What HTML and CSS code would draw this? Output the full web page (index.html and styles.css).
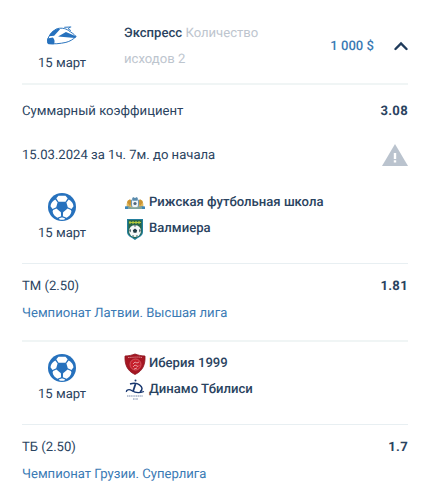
FILE: index.html
```html
<!DOCTYPE html>
<html lang="ru">
<head>
    <meta charset="UTF-8">
    <meta name="viewport" content="width=device-width, initial-scale=1.0">
    <title>Экспресс</title>
    <link rel="stylesheet" href="styles.css">
</head>
<body>
    <svg class="sprite" width="0" height="0">
        <symbol id="ball" viewBox="0 0 28 28">
            <circle cx="14" cy="14" r="14" fill="#2671bd"/>
            <g fill="#fff">
                <path d="M10.5 2.7h7l2.2 2.6-2.2 3.4h-7L8.300 5.300z"/>
                <path d="M7.3 6.500l2.300 3-1.400 4.700-3.700 1.700-2-2.700C2.800 10.200 4.700 7.900 7.300 6.500z"/>
                <path d="M20.7 6.500l-2.300 3 1.400 4.700 3.700 1.700 2-2.700c-.3-3-2.200-5.300-4.800-6.700z"/>
                <path d="M8.400 15.500l4.500 3.700.2 4.100-3.700 1.500c-2.600-1.200-4.300-3.500-4.800-6.200l.5-1.500z"/>
                <path d="M19.600 15.500l-4.500 3.700-.2 4.100 3.700 1.500c2.600-1.200 4.300-3.500 4.800-6.200l-.5-1.500z"/>
                <path d="M10.800 25.500l2.500-1h1.400l2.500 1-.8.9c-1.600.4-3.200.4-4.800 0z"/>
            </g>
        </symbol>
    </svg>

    <div class="coupon">
        <div class="coupon-header">
            <div class="event-date">
                <svg class="train" viewBox="0 0 96 58">
                    <path d="M5 53C1 40 10 22 31 9c11-4 27-3 37 5 9 6 17 11 23 18-9 9-19 15-31 18-18 4-38 6-55 3z" fill="#fff" stroke="#2671bd" stroke-width="3"/>
                    <path d="M3 38l17-3c6 5 7 14 3 21H7C3 52 2 46 3 38zM8 31C14 19 24 10 38 8l4 2-18 20zM36 32l24-14 32 14-4 5z" fill="#2671bd"/>
                    <path d="M55 4l21-1M73 3l-6 6 8 5" fill="none" stroke="#2671bd" stroke-width="3"/>
                </svg>
                <span>15 март</span>
            </div>
            <div class="coupon-title"><b>Экспресс</b> Количество исходов 2</div>
            <div class="stake">1 000 $</div>
            <svg class="chevron" viewBox="0 0 14 10">
                <path d="M1.500 8L7 2.400 12.500 8" fill="none" stroke="#1f3b5b" stroke-width="2.400" stroke-linecap="round"/>
            </svg>
        </div>

        <div class="row total">
            <span>Суммарный коэффициент</span>
            <b>3.08</b>
        </div>
        <div class="row start">
            <span>15.03.2024 за 1ч. 7м. до начала</span>
            <svg class="warning" viewBox="0 0 26 22">
                <path d="M13 0l13 22H0z" fill="#bac3ce"/>
                <path d="M11.8 9h2.4v6h-2.4zM11.8 16.3h2.4v2.3h-2.4z" fill="#fff"/>
            </svg>
        </div>

        <div class="event">
            <div class="event-date">
                <svg class="ball"><use href="#ball"/></svg>
                <span>15 март</span>
            </div>
            <div class="teams">
                <div class="team">
                    <svg class="crest" viewBox="0 0 22 22">
                        <path d="M3 15c-1-2 0-5 1-7l3 0 1 5 6 0 1-5 3 0c1 2 2 5 1 7z" fill="#e0b75c"/>
                        <path d="M3 10l3-3 2 3-2 4zM19 10l-3-3-2 3 2 4z" fill="#c99232"/>
                        <path d="M7.500 8h7v5c0 2-1.500 3-3.500 3s-3.500-1-3.500-3z" fill="#eef4f8" stroke="#4f89b5" stroke-width=".8"/>
                        <path d="M8 7l1-2 2 1 2-1 1 2-1 1.500H9z" fill="#5a8bad"/>
                        <circle cx="11" cy="11.500" r="1.600" fill="#506579"/>
                        <path d="M1 14.500c4-1 6 1.500 10 1s6-2 10-1v2.500H1z" fill="#3b85b9"/>
                        <path d="M4 16h14" stroke="#e6cf72" stroke-width=".8"/>
                    </svg>
                    <span>Рижская футбольная школа</span>
                </div>
                <div class="team">
                    <svg class="crest" viewBox="0 0 22 22">
                        <path d="M3 1h16v13c0 4-4 5-8 8-4-3-8-4-8-8z" fill="#247f9d"/>
                        <path d="M4.300 2h13.400v12c0 3-3 4-6.700 6.500C7 18 4.300 17 4.300 14z" fill="#28664a"/>
                        <path d="M5 4.500h12M6 3v3M9 3v3M12 3v3M15 3v3" stroke="#b6cb3d" stroke-width="1.100"/>
                        <circle cx="11" cy="13" r="6" fill="#f5f8f8"/>
                        <path d="M11 10.500l2.200 1.700-.8 2.600H9.600l-.8-2.600zM9.500 7.500h3l-1.500 1.200zM5.300 12l1.300-1 .2 2.300-.8 1.200zM16.700 12l-1.300-1-.2 2.300.8 1.200zM8 17l1.700.5v1.200zM14 17l-1.700.5v1.200z" fill="#203942"/>
                    </svg>
                    <span>Валмиера</span>
                </div>
            </div>
        </div>
        <div class="bet">
            <div class="row">
                <span>ТМ (2.50)</span>
                <b>1.81</b>
            </div>
            <div class="league">Чемпионат Латвии. Высшая лига</div>
        </div>

        <div class="event event-next">
            <div class="event-date">
                <svg class="ball"><use href="#ball"/></svg>
                <span>15 март</span>
            </div>
            <div class="teams">
                <div class="team">
                    <svg class="crest" viewBox="0 0 22 22">
                        <path d="M1 3c4 0 7-1 10-2 3 1 6 2 10 2 .5 8-2 15-10 18.500C3 18 .5 11 1 3z" fill="#a51622" stroke="#8b1822" stroke-width=".8"/>
                        <path d="M4 4.500c5 0 9-1 14 0" fill="none" stroke="#d9858a" stroke-width="1" stroke-dasharray="1.500 .6"/>
                        <circle cx="11.500" cy="11.500" r="5.500" fill="#c61f2c" stroke="#d9656c" stroke-width=".8"/>
                        <path d="M9 11l2-2 2 1 2-1M9 14l2-2 3 1.500 1-1M10 16l3-1" fill="none" stroke="#efb5b7" stroke-width=".8"/>
                    </svg>
                    <span>Иберия 1999</span>
                </div>
                <div class="team">
                    <svg class="crest" viewBox="0 0 22 22">
                        <g fill="none" stroke="#18376f">
                            <path d="M6 5c3-1 7-1 9.500.8 3 2 3.500 5 .5 7" stroke-width="1.500"/>
                            <path d="M11.500 5L9 12.500" stroke-width="1.800"/>
                            <path d="M2.500 13c-.5-2.500 3-3 5.500-1.200 3 2 8 2.200 12 .7" stroke-width="1.300"/>
                            <path d="M3 17h16" stroke-width="1" stroke-dasharray="1.300 .5" opacity=".6"/>
                            <path d="M9 20h5" stroke-dasharray="1 .4" opacity=".6"/>
                        </g>
                        <circle cx="11.500" cy="1.500" r="1" fill="#18376f"/>
                    </svg>
                    <span>Динамо Тбилиси</span>
                </div>
            </div>
        </div>
        <div class="bet">
            <div class="row">
                <span>ТБ (2.50)</span>
                <b>1.7</b>
            </div>
            <div class="league">Чемпионат Грузии. Суперлига</div>
        </div>
    </div>
</body>
</html>
```
FILE: styles.css
```css
:root {
    --text-color: #2a4360;
    --link-color: #3a7ab4;
    --muted-color: #bdc5ce;
    --line-color: #e8eff2;
    --line-light: #f0f5f5;
}

* {
    box-sizing: border-box;
}

body {
    margin: 0;
    background: #fff;
    color: var(--text-color);
    font-family: Roboto, "Liberation Sans", sans-serif;
    font-size: 13.1px;
    line-height: 26px;
    text-rendering: geometricPrecision;
}

svg {
    display: block;
    flex-shrink: 0;
}

.sprite {
    position: absolute;
}

.coupon {
    width: 386px;
    margin-left: 22px;
}

.coupon-header {
    display: flex;
    height: 85px;
    padding-top: 21px;
    border-bottom: 2px solid var(--line-light);
}

.event-date {
    display: flex;
    flex-direction: column;
    align-items: center;
    flex-shrink: 0;
    width: 80px;
    margin-right: 22px;
}

.train {
    width: 32px;
    height: 19px;
    margin: 5px 0 6px;
}

.coupon-title {
    width: 170px;
    color: var(--muted-color);
}

.coupon-title b {
    color: var(--text-color);
    font-weight: 500;
}

.stake {
    margin-top: 13px;
    margin-left: auto;
    color: var(--link-color);
    font-weight: 500;
}

.chevron {
    width: 14px;
    height: 10px;
    margin: 20px 0 0 20px;
}

.row {
    display: flex;
    justify-content: space-between;
    align-items: center;
}

.row b {
    font-weight: 700;
    letter-spacing: 0.3px;
}

.total {
    margin-top: 14px;
}

.start {
    margin-top: 18px;
}

.warning {
    width: 26px;
    height: 22px;
    margin-bottom: 2px;
}

.event {
    display: flex;
    height: 95px;
    padding-top: 21px;
    border-bottom: 1px solid var(--line-color);
}

.ball {
    width: 28px;
    height: 28px;
    margin: 3px 0 0;
}

.team {
    display: flex;
    align-items: center;
    gap: 3px;
    font-weight: 500;
}

.crest {
    width: 22px;
    height: 22px;
}

.bet {
    padding-top: 10px;
}

.league {
    margin-top: 1px;
    color: var(--link-color);
}

.event-next {
    height: 85px;
    margin-top: 13px;
    padding-top: 9px;
    border-top: 2px solid var(--line-light);
}
```
